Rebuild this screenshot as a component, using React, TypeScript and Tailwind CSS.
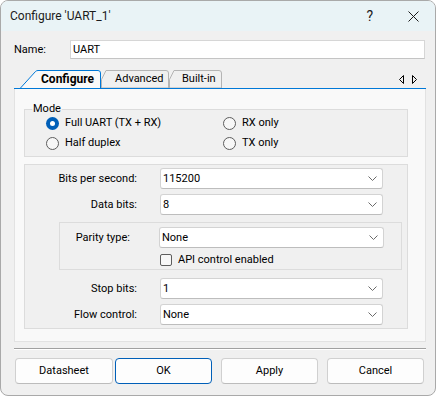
import React from "react";

function Chevron() {
  return (
    <svg width="9" height="5" viewBox="0 0 9 5" className="mr-[5px] shrink-0">
      <path d="M0.5 0.5 L4.5 4.5 L8.5 0.5" fill="none" stroke="#6b6b6b" strokeWidth="1" />
    </svg>
  );
}

function Select({ value, wide }: { value: string; wide?: boolean }) {
  return (
    <div
      className={`${wide ? "w-[225px]" : "w-[223px]"} h-[21px] bg-white border border-[#d3d3d3] border-b-[#bdbdbd] rounded-[3px] flex items-center justify-between pl-[2px]`}
    >
      <span>{value}</span>
      <Chevron />
    </div>
  );
}

function Radio({ label, checked }: { label: string; checked?: boolean }) {
  return (
    <div className="h-[16px] flex items-center gap-[6px]">
      {checked ? (
        <span className="w-[13px] h-[13px] rounded-full bg-[#005fb8] flex items-center justify-center">
          <span className="w-[5px] h-[5px] rounded-full bg-white" />
        </span>
      ) : (
        <span className="w-[13px] h-[13px] rounded-full border border-[#5d5d5d] bg-[#f7f7f7]" />
      )}
      <span>{label}</span>
    </div>
  );
}

function Row({ label, value }: { label: string; value: string }) {
  return (
    <div className="grid grid-cols-[112px_223px] gap-x-[23px] items-center">
      <span className="text-right">{label}</span>
      <Select value={value} />
    </div>
  );
}

function Tab({
  label,
  width,
  pad,
  active,
}: {
  label: string;
  width: number;
  pad: number;
  active?: boolean;
}) {
  const w = width;
  const path = active
    ? `M0.5 18 L15.5 1.5 Q16.5 0.5 18 0.5 L${w - 3} 0.5 Q${w - 0.5} 0.5 ${w - 0.5} 3 L${w - 0.5} 18`
    : `M0.5 18 L0.5 9.5 L5 0.5 L${w - 3} 0.5 Q${w - 0.5} 0.5 ${w - 0.5} 3 L${w - 0.5} 18 Z`;
  return (
    <div className="relative h-[18px] flex items-center" style={{ width: w, paddingLeft: pad }}>
      <svg className="absolute inset-0" width={w} height="18" viewBox={`0 0 ${w} 18`}>
        <path
          d={path}
          fill={active ? "#f9f9f9" : "#f0f0f0"}
          stroke={active ? "#0078d7" : "#b4b4b4"}
          strokeWidth="1"
        />
      </svg>
      <span className={`relative ${active ? "font-bold text-[12px]" : ""}`}>{label}</span>
    </div>
  );
}

export default function App() {
  return (
    <div className="w-[436px] h-[396px] bg-white font-['Roboto',sans-serif] text-[11px] text-black leading-[14px]">
      <div className="w-[436px] h-[396px] rounded-[8px] border border-[#a9a9a9] bg-[#f0f0f0] overflow-hidden flex flex-col">
        {/* title bar */}
        <div className="h-[30px] bg-[#e9f3f6] flex items-center pl-[9px] shrink-0">
          <span className="text-[12px] text-[#1b1b1b]">Configure 'UART_1'</span>
          <span className="ml-auto text-[14px] text-[#1b1b1b] mr-[35px]">?</span>
          <svg width="11" height="11" viewBox="0 0 11 11" className="mr-[16px]">
            <path d="M0.5 0.5 L10.5 10.5 M10.5 0.5 L0.5 10.5" stroke="#1b1b1b" strokeWidth="1" />
          </svg>
        </div>

        <div className="pl-[13px] pr-[9px] flex flex-col">
          {/* name */}
          <div className="mt-[9px] flex items-center h-[19px]">
            <span className="w-[56px]">Name:</span>
            <div className="w-[355px] h-[19px] bg-white border border-[#d6d6d6] border-b-[#c4c4c4] flex items-center pl-[2px]">
              UART
            </div>
          </div>

          {/* tabs */}
          <div className="mt-[11px] h-[19px] border-b border-[#0078d7] flex items-end pl-[6px]">
            <Tab label="Configure" width={81} pad={21} active />
            <Tab label="Advanced" width={68} pad={14} />
            <Tab label="Built-in" width={53} pad={13} />
            <div className="ml-auto mr-[9px] mb-[4px] flex items-center gap-[8px]">
              <svg width="5" height="9" viewBox="0 0 5 9">
                <path d="M4.5 0.5 L0.5 4.5 L4.5 8.5 Z" fill="none" stroke="#000" strokeWidth="1" />
              </svg>
              <svg width="5" height="9" viewBox="0 0 5 9">
                <path d="M0.5 0.5 L4.5 4.5 L0.5 8.5 Z" fill="none" stroke="#000" strokeWidth="1" />
              </svg>
            </div>
          </div>

          {/* panel */}
          <div className="h-[253px] bg-[#f9f9f9] border-x border-b border-[#e2e2e2] pl-[9px] flex flex-col">
            <fieldset className="mt-[14px] w-[384px] border border-[#dcdcdc] bg-[#f0f0f0] pb-[5px]">
              <legend className="ml-[7px] px-[1px] leading-[12px]">Mode</legend>
              <div className="grid grid-cols-[177px_1fr] gap-y-[4px] pl-[21px]">
                <Radio label="Full UART (TX + RX)" checked />
                <Radio label="RX only" />
                <Radio label="Half duplex" />
                <Radio label="TX only" />
              </div>
            </fieldset>

            <div className="mt-[7px] w-[384px] border border-[#dcdcdc] bg-[#f0f0f0] pt-[3px] pb-[3px] flex flex-col">
              <Row label="Bits per second:" value="115200" />
              <div className="mt-[5px]">
                <Row label="Data bits:" value="8" />
              </div>
              <div className="mt-[7px] ml-[34px] w-[343px] border border-[#dcdcdc] pt-[4px] pb-[1px]">
                <div className="grid grid-cols-[70px_225px] gap-x-[29px] items-center">
                  <span className="text-right">Parity type:</span>
                  <Select value="None" wide />
                </div>
                <div className="mt-[4px] h-[16px] flex items-center pl-[100px] gap-[6px]">
                  <span className="w-[12px] h-[12px] rounded-[2px] border border-[#5d5d5d] bg-[#f7f7f7]" />
                  <span>API control enabled</span>
                </div>
              </div>
              <div className="mt-[8px]">
                <Row label="Stop bits:" value="1" />
              </div>
              <div className="mt-[5px]">
                <Row label="Flow control:" value="None" />
              </div>
            </div>
          </div>

          {/* separator */}
          <div className="mt-[6px] h-[2px] border-t border-[#a0a0a0] border-b border-b-white" />

          {/* buttons */}
          <div className="mt-[8px] pl-[1px] flex">
            <button className="w-[98px] h-[26px] bg-[#fdfdfd] border border-[#d0d0d0] border-b-[#bcbcbc] rounded-[4px]">
              Datasheet
            </button>
            <button className="ml-[2px] w-[97px] h-[26px] bg-[#fdfdfd] border border-[#005fb8] rounded-[4px]">
              OK
            </button>
            <button className="ml-[9px] w-[97px] h-[26px] bg-[#fdfdfd] border border-[#d0d0d0] border-b-[#bcbcbc] rounded-[4px]">
              Apply
            </button>
            <button className="ml-[9px] w-[97px] h-[26px] bg-[#fdfdfd] border border-[#d0d0d0] border-b-[#bcbcbc] rounded-[4px]">
              Cancel
            </button>
          </div>
        </div>
      </div>
    </div>
  );
}
